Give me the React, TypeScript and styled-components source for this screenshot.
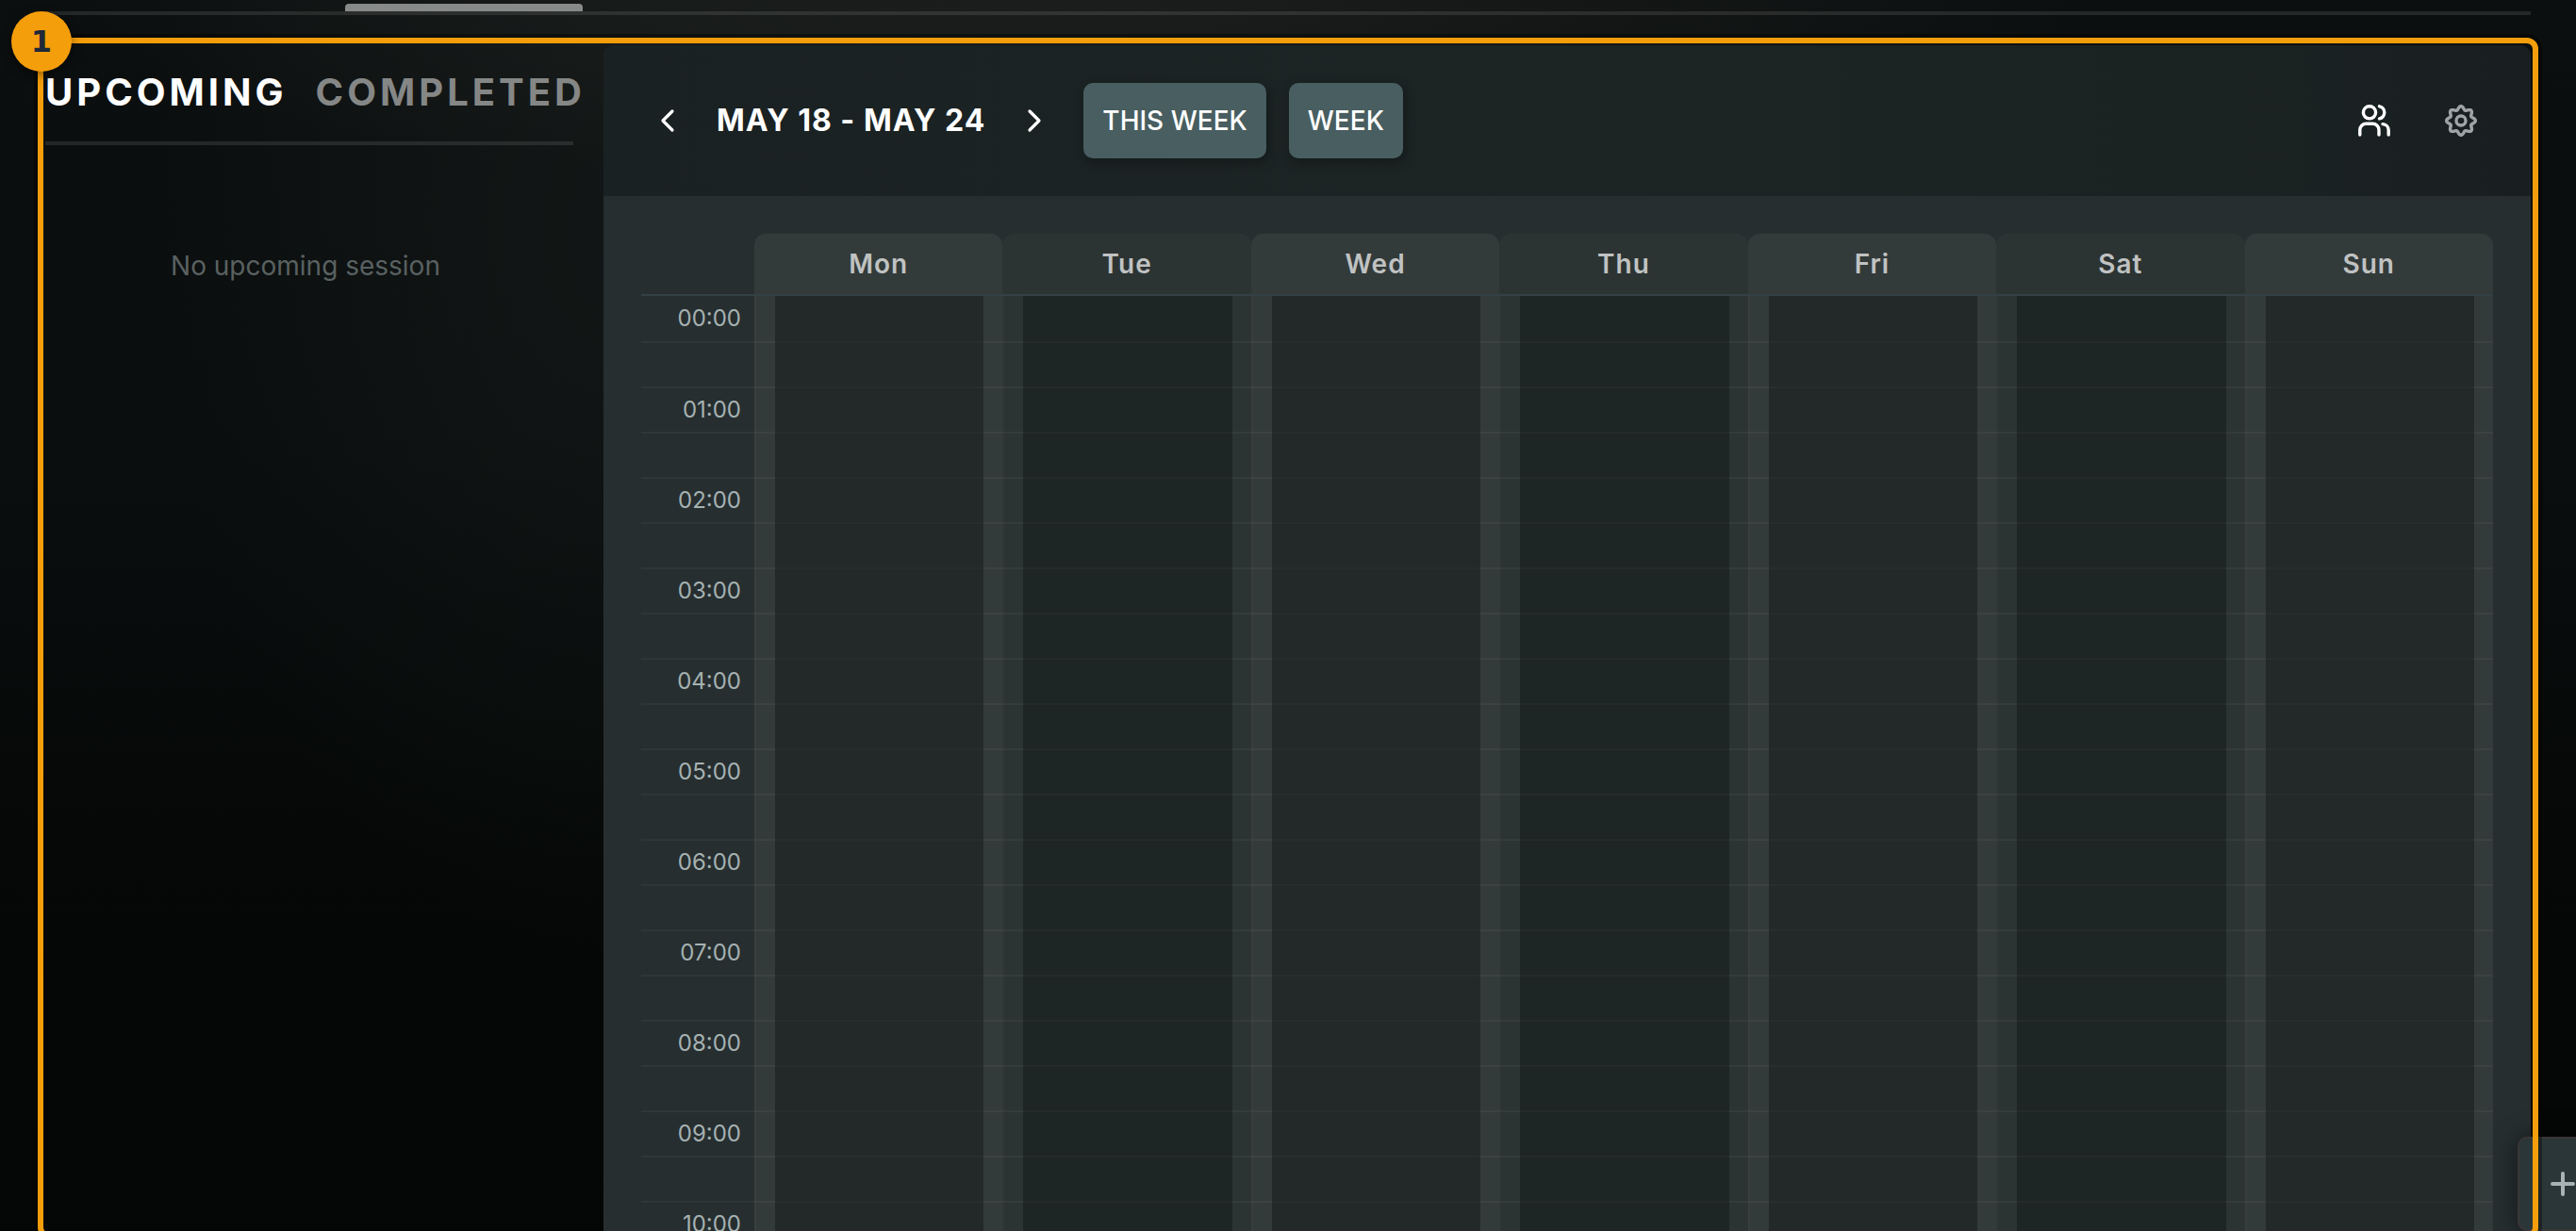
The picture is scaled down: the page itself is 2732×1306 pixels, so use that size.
import React from "react";
import styled, { createGlobalStyle } from "styled-components";

const GlobalStyle = createGlobalStyle`
  *, *::before, *::after { box-sizing: border-box; }
  html, body { margin: 0; background: #050707; }
  body { font-family: Inter, "Liberation Sans", sans-serif; color: #fff; }
  button { font: inherit; color: inherit; border: 0; padding: 0; background: none; cursor: pointer; }
`;

const Page = styled.div`
  position: relative;
  display: flex;
  flex-direction: column;
  height: 100vh;
  overflow: hidden;
  background:
    radial-gradient(ellipse 40% 16% at 42% 0%, rgba(38, 40, 38, 0.6), transparent),
    radial-gradient(ellipse 18% 60% at 24% 18%, rgba(24, 30, 29, 0.5), transparent),
    linear-gradient(180deg, #0c0f0f 0%, #0b0e0e 35%, #050807 70%, #040606 100%);
`;

const TopBar = styled.div`
  flex: none;
  display: flex;
  align-items: flex-end;
  height: 16px;
  margin: 0 48px;
  border-bottom: 4px solid rgba(255, 255, 255, 0.1);
`;

const TabMarker = styled.div`
  width: 252px;
  height: 8px;
  margin-left: 318px;
  border-radius: 4px 4px 0 0;
  background: #888a89;
`;

const Main = styled.main`
  position: relative;
  flex: 1;
  min-height: 0;
  display: grid;
  grid-template-columns: 560px minmax(0, 1fr);
  gap: 32px;
  margin: 32px 48px 0;
`;

const Highlight = styled.div`
  position: absolute;
  inset: -8px;
  border: 6px solid #f59e0b;
  border-radius: 12px;
  box-shadow: 0 0 0 4px rgba(0, 0, 0, 0.35);
  pointer-events: none;
  z-index: 3;
`;

const Marker = styled.div`
  position: absolute;
  top: -36px;
  left: -36px;
  display: grid;
  place-items: center;
  width: 64px;
  height: 64px;
  border-radius: 50%;
  background: #f59e0b;
  color: #1f2937;
  font: 700 32px/64px "DejaVu Sans", sans-serif;
  box-shadow: 0 4px 12px rgba(0, 0, 0, 0.4);
  z-index: 4;
`;

const Sidebar = styled.aside`
  min-width: 0;
`;

const SessionTabs = styled.div`
  display: flex;
  gap: 30px;
  height: 106px;
  padding-top: 26px;
  border-bottom: 4px solid rgba(255, 255, 255, 0.1);
`;

const SessionTab = styled.button<{ $active?: boolean }>`
  height: 48px;
  font-size: 40px;
  line-height: 48px;
  font-weight: 700;
  letter-spacing: 4px;
  white-space: nowrap;
  color: ${(p) => (p.$active ? "#fff" : "#858786")};
`;

const Empty = styled.p`
  margin: 110px 0 0;
  padding-right: 8px;
  text-align: center;
  font-size: 28px;
  line-height: 36px;
  color: #596161;
`;

const Calendar = styled.section`
  min-width: 0;
  overflow: hidden;
  border-radius: 12px 12px 0 0;
  background: #262e30;
`;

const Toolbar = styled.header`
  display: flex;
  align-items: center;
  justify-content: space-between;
  height: 160px;
  padding: 0 54px 0 48px;
  background: linear-gradient(90deg, #1a2122, #1c2424 50%, #1b2322 80%, #191f21);
`;

const ToolGroup = styled.div<{ $gap: number }>`
  display: flex;
  align-items: center;
  gap: ${(p) => p.$gap}px;
`;

const IconButton = styled.button<{ $muted?: boolean }>`
  display: grid;
  place-items: center;
  width: 40px;
  height: 40px;
  color: ${(p) => (p.$muted ? "#a0a4a4" : "#fff")};
`;

const Range = styled.h2`
  margin: 0;
  font-size: 32px;
  line-height: 40px;
  font-weight: 700;
  letter-spacing: 1px;
  white-space: nowrap;
`;

const PillButton = styled.button`
  height: 80px;
  padding: 0 20px;
  border-radius: 10px;
  background: #485e60;
  font-size: 28px;
  line-height: 36px;
  font-weight: 500;
  white-space: nowrap;
  box-shadow: 2px 4px 12px rgba(0, 0, 0, 0.3);
`;

const Schedule = styled.div`
  padding: 40px 40px 0;
`;

const Grid = styled.table`
  width: 100%;
  table-layout: fixed;
  border-collapse: separate;
  border-spacing: 0;
`;

const stripe = (odd: boolean) => (odd ? "#333b3a" : "#2c3433");

const Corner = styled.td`
  width: 120px;
  padding: 0;
  border-bottom: 2px solid #334044;
`;

const DayHead = styled.th<{ $odd: boolean }>`
  height: 66px;
  padding: 0;
  border-bottom: 2px solid #334044;
  border-radius: 12px 12px 0 0;
  background: ${(p) => stripe(p.$odd)};
  background-clip: padding-box;
  font-size: 28px;
  line-height: 36px;
  font-weight: 600;
  letter-spacing: 1px;
  color: #c0c2c2;
`;

const TimeCell = styled.th`
  padding: 0 14px 2px 0;
  box-shadow: inset 0 -2px #2f3638;
  text-align: right;
  font-size: 24px;
  line-height: 28px;
  font-weight: 400;
  color: #a5b1b0;
`;

const SlotCell = styled.td<{ $odd: boolean }>`
  padding: 0 20px 0 22px;
  background: ${(p) => stripe(p.$odd)};
  box-shadow: inset 0 -2px rgba(255, 255, 255, 0.04), inset 2px 0 rgba(255, 255, 255, 0.02);
`;

const Slot = styled.div<{ $odd: boolean; $first: boolean }>`
  height: ${(p) => (p.$first ? 50 : 48)}px;
  border-bottom: 2px solid ${(p) => (p.$odd ? "#262d2c" : "#232a29")};
  background: ${(p) => (p.$odd ? "#222928" : "#1e2525")};
`;

const AddButton = styled.button`
  position: absolute;
  right: -82px;
  bottom: 0;
  display: grid;
  place-items: center;
  width: 96px;
  height: 100px;
  border: 2px solid #3a3636;
  border-radius: 10px;
  background: #2a3638;
  color: #a9b2b4;
  box-shadow: 0 0 24px rgba(0, 0, 0, 0.5);
  z-index: 2;
`;

const Chevron = ({ d }: { d: string }) => (
  <svg width="40" height="40" viewBox="0 0 40 40" fill="none" stroke="currentColor" strokeWidth="3.2" strokeLinecap="round" strokeLinejoin="round" aria-hidden="true">
    <path d={d} />
  </svg>
);

const UsersIcon = () => (
  <svg width="40" height="40" viewBox="0 0 40 40" fill="none" stroke="currentColor" strokeWidth="3.4" strokeLinecap="round" aria-hidden="true">
    <circle cx="15" cy="11.3" r="6.6" />
    <path d="M25.5 4.8a6.7 6.7 0 0 1 0 13.1" />
    <path d="M4.8 35v-5a6.6 6.6 0 0 1 6.6-6.7h7A6.6 6.6 0 0 1 25 30v5" />
    <path d="M29 23.6a6.6 6.6 0 0 1 6.2 6.6V35" />
  </svg>
);

const gearPath = (() => {
  const points: string[] = [];
  for (let i = 0; i <= 192; i++) {
    const a = (i / 192) * Math.PI * 2;
    const r = 13.5 + 1.8 * Math.cos(8 * a);
    points.push(`${(20 + r * Math.sin(a)).toFixed(2)} ${(20 - r * Math.cos(a)).toFixed(2)}`);
  }
  return `M${points.join("L")}Z`;
})();

const GearIcon = () => (
  <svg width="40" height="40" viewBox="0 0 40 40" fill="none" stroke="currentColor" strokeWidth="3.4" strokeLinejoin="round" aria-hidden="true">
    <path d={gearPath} />
    <circle cx="20" cy="20" r="5" />
  </svg>
);

const PlusIcon = () => (
  <svg width="28" height="28" viewBox="0 0 28 28" stroke="currentColor" strokeWidth="4" strokeLinecap="round" aria-hidden="true">
    <path d="M14 3v22M3 14h22" />
  </svg>
);

const days = ["Mon", "Tue", "Wed", "Thu", "Fri", "Sat", "Sun"];
const slots = Array.from({ length: 22 }, (_, i) => i);

export default function App() {
  return (
    <Page>
      <GlobalStyle />
      <TopBar>
        <TabMarker />
      </TopBar>
      <Main>
        <Sidebar>
          <SessionTabs role="tablist">
            <SessionTab role="tab" aria-selected="true" $active>UPCOMING</SessionTab>
            <SessionTab role="tab" aria-selected="false">COMPLETED</SessionTab>
          </SessionTabs>
          <Empty>No upcoming session</Empty>
        </Sidebar>
        <Calendar>
          <Toolbar>
            <ToolGroup $gap={32}>
              <ToolGroup $gap={32}>
                <IconButton aria-label="Previous week"><Chevron d="M25 10L15 20L25 30" /></IconButton>
                <Range>MAY 18 - MAY 24</Range>
                <IconButton aria-label="Next week"><Chevron d="M15 10L25 20L15 30" /></IconButton>
              </ToolGroup>
              <ToolGroup $gap={24}>
                <PillButton>THIS WEEK</PillButton>
                <PillButton>WEEK</PillButton>
              </ToolGroup>
            </ToolGroup>
            <ToolGroup $gap={52}>
              <IconButton aria-label="Participants"><UsersIcon /></IconButton>
              <IconButton $muted aria-label="Settings"><GearIcon /></IconButton>
            </ToolGroup>
          </Toolbar>
          <Schedule>
            <Grid>
              <thead>
                <tr>
                  <Corner />
                  {days.map((d, i) => (
                    <DayHead key={d} scope="col" $odd={i % 2 === 0}>{d}</DayHead>
                  ))}
                </tr>
              </thead>
              <tbody>
                {slots.map((s) => (
                  <tr key={s}>
                    <TimeCell scope="row">
                      {s % 2 === 0 ? `${String(s / 2).padStart(2, "0")}:00` : null}
                    </TimeCell>
                    {days.map((d, i) => (
                      <SlotCell key={d} $odd={i % 2 === 0}>
                        <Slot $odd={i % 2 === 0} $first={s === 0} />
                      </SlotCell>
                    ))}
                  </tr>
                ))}
              </tbody>
            </Grid>
          </Schedule>
        </Calendar>
        <AddButton aria-label="Add"><PlusIcon /></AddButton>
        <Highlight />
        <Marker>1</Marker>
      </Main>
    </Page>
  );
}
